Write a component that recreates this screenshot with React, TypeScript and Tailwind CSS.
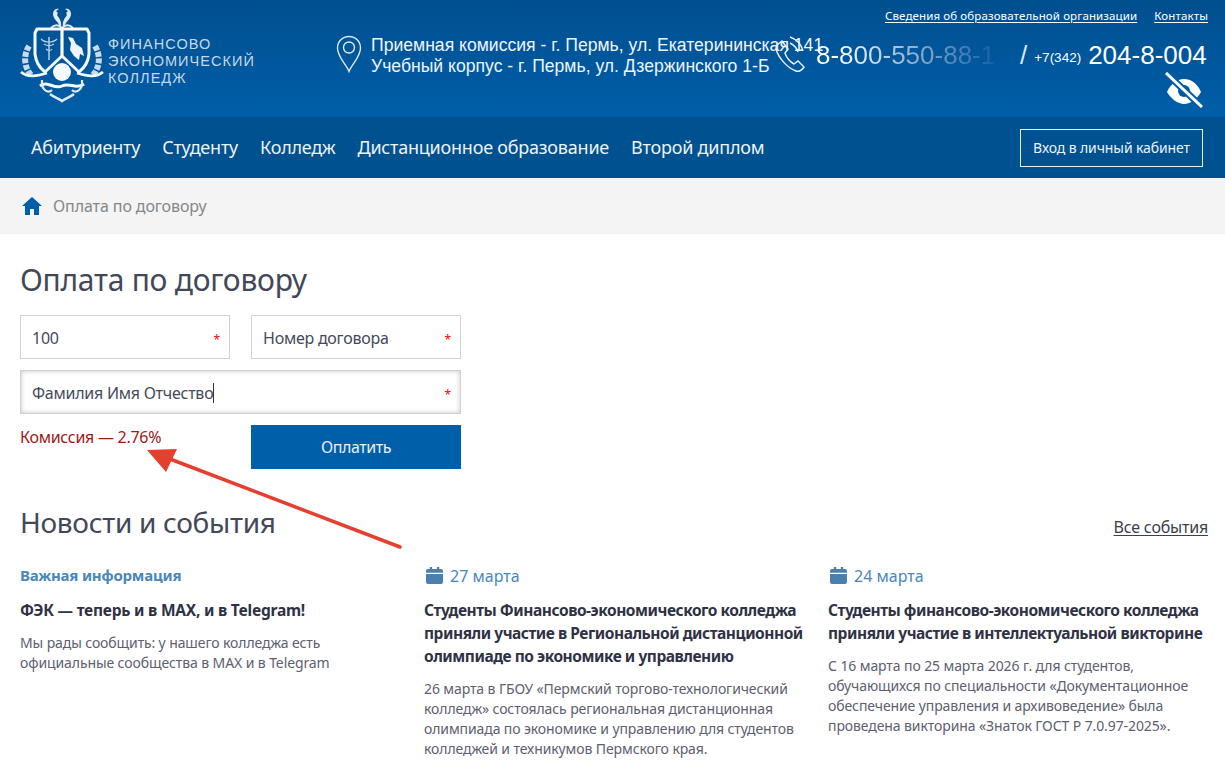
import type { ReactNode } from 'react';

const bodyFont = "font-['Noto_Sans',sans-serif]";

function Logo() {
  return (
    <svg width="84" height="98" viewBox="0 0 84 98" fill="none" className="shrink-0 blur-[0.35px]">
      {/* Птицы сверху */}
      <path d="M39 21 C40 16 33 14 33 8 C33 4 36 2 39 3 L36 5 C38 6 38 8 37 9 C39 12 42 15 41 21 Z" fill="#dfeaf3" />
      <path d="M45 21 C44 16 51 14 51 8 C51 4 48 2 45 3 L48 5 C46 6 46 8 47 9 C45 12 42 15 43 21 Z" fill="#dfeaf3" />
      <path d="M31 22 C35 18 39 19 42 22 C45 19 49 18 53 22" stroke="#dfeaf3" strokeWidth="2" />
      {/* Щит */}
      <path d="M17 23 L67 23 L69 27 L69 48 C68 57 63 63 59 66 L42 50 L25 66 C21 63 16 57 15 48 L15 27 Z" stroke="#f6f9fc" strokeWidth="3" strokeLinejoin="round" />
      <path d="M42 23 L42 50" stroke="#f6f9fc" strokeWidth="3.2" />
      {/* Жезл и орёл */}
      <path d="M29 31 L29 54" stroke="#b8d0e4" strokeWidth="1.5" />
      <path d="M21 33 C25 37 33 37 37 33 M24 38 C27 40 31 40 34 38 M26 43 C28 45 31 45 32 43" stroke="#b8d0e4" strokeWidth="1.2" />
      <path d="M48 31 L53 32 L56 38 L62 42 L64 50 L60 48 L59 54 L54 50 L50 44 L51 37 Z" fill="#eef4f9" />
      {/* Ветви */}
      <path d="M9 40 C3 50 4 62 12 70" stroke="#c8dbea" strokeWidth="6" strokeDasharray="5 1.5" />
      <path d="M75 40 C81 50 80 62 72 70" stroke="#c8dbea" strokeWidth="6" strokeDasharray="5 1.5" />
      <path d="M1 66 C8 72 17 70 27 67 M83 66 C76 72 67 70 57 67" stroke="#f6f9fc" strokeWidth="2.8" />
      {/* Лента и солнце */}
      <circle cx="42" cy="66" r="9" fill="#f6f9fc" />
      <path d="M20 80 C28 74 34 84 42 80 C50 76 56 84 64 78" stroke="#f6f9fc" strokeWidth="3" />
      <path d="M22 74 C21 84 28 88 32 84 M62 74 C63 84 56 88 52 84" stroke="#dfeaf3" strokeWidth="2.2" />
      <path d="M30 88 C35 92 38 92 42 95 C46 92 49 92 54 88" stroke="#dfeaf3" strokeWidth="2.6" />
    </svg>
  );
}

function Pin() {
  return (
    <svg width="26" height="38" viewBox="0 0 26 38" fill="none" stroke="#dce8f2" strokeWidth="1.4" className="shrink-0">
      <path d="M13 36.5 C10 29 1.5 22 1.5 13 C1.5 6.5 6.5 1.5 13 1.5 C19.5 1.5 24.5 6.5 24.5 13 C24.5 22 16 29 13 36.5 Z" />
      <circle cx="13" cy="12.5" r="5.5" />
    </svg>
  );
}

function PhoneIcon() {
  return (
    <svg width="30" height="36" viewBox="0 0 30 36" fill="none" stroke="#eef4fa" strokeWidth="1.4" className="block">
      <path d="M2 9 L7 5 L13 13 L10 17 C11 21 15 26 19 28 L23 25 L29 31 C27 34 24 36 21 35 C12 32 3 21 1 13 C1 11 1 10 2 9 Z" />
      <path d="M15 1 C21 3 26 8 28 15" />
      <path d="M15 7 C19 9 22 12 23 16" />
    </svg>
  );
}

function EyeOff() {
  return (
    <svg width="38" height="36" viewBox="0 0 38 36" className="mr-[5px]">
      <path d="M2 20 C6 11 13 7 19 7 C26 7 32 11 36 20 C32 27 26 32 19 32 C13 32 6 27 2 20 Z" fill="#fff" />
      <circle cx="19" cy="19" r="6" fill="#0059a0" />
      <path d="M1 1 L37 35" stroke="#005ca5" strokeWidth="7" />
      <path d="M1 1 L37 35" stroke="#fff" strokeWidth="3" />
    </svg>
  );
}

function HomeIcon() {
  return (
    <svg width="20" height="18" viewBox="0 0 20 18" fill="#005fa9" className="shrink-0">
      <path d="M10 0 L20 9 L17 9 L17 18 L12 18 L12 12 L8 12 L8 18 L3 18 L3 9 L0 9 Z" />
    </svg>
  );
}

function Field({ text, caret, wide }: { text: string; caret?: boolean; wide?: boolean }) {
  return (
    <div
      className={`flex h-[44px] items-center justify-between border border-[#d2d2d2] pl-[11px] pr-[9px] text-[16px] text-[#444a5c] ${
        wide ? 'shadow-[inset_0_0_5px_rgba(0,0,0,0.22)]' : ''
      }`}
    >
      <span className="mt-[1px] flex items-center tracking-[-0.25px]">
        {text}
        {caret && <span className="h-[20px] w-px bg-[#333]" />}
      </span>
      <span className="mt-[6px] text-[12px] leading-none text-[#f00]">*</span>
    </div>
  );
}

const news = [
  {
    date: '27 марта',
    title: ['Студенты Финансово-экономического колледжа', 'приняли участие в Региональной дистанционной', 'олимпиаде по экономике и управлению'],
    body: ['26 марта в ГБОУ «Пермский торгово-технологический', 'колледж» состоялась региональная дистанционная', 'олимпиада по экономике и управлению для студентов', 'колледжей и техникумов Пермского края.'],
  },
  {
    date: '24 марта',
    title: ['Студенты финансово-экономического колледжа', 'приняли участие в интеллектуальной викторине'],
    body: ['С 16 марта по 25 марта 2026 г. для студентов,', 'обучающихся по специальности «Документационное', 'обеспечение управления и архивоведение» была', 'проведена викторина «Знаток ГОСТ Р 7.0.97-2025».'],
  },
];

function Lines({ items, className }: { items: string[]; className: string }) {
  return (
    <div className={className}>
      {items.map((l) => (
        <div key={l} className="whitespace-nowrap">{l}</div>
      ))}
    </div>
  );
}

function Head({ children }: { children: ReactNode }) {
  return <div className="h-[24px] text-[16px] leading-[24px] text-[#4a86b8]">{children}</div>;
}

export default function App() {
  return (
    <div className={`relative h-[770px] overflow-hidden bg-white ${bodyFont}`}>
      {/* Шапка */}
      <header className="flex h-[117px] bg-gradient-to-b from-[#004f8f] to-[#005ea8] text-white">
        <div className="flex w-[336px] shrink-0 items-start gap-[4px] pl-[20px] pt-[6px]">
          <Logo />
          <div className="mt-[30px] font-['Liberation_Sans',sans-serif] text-[14.5px] leading-[17px] tracking-[1.05px] text-[#c5d8e8]">
            <div>ФИНАНСОВО</div>
            <div className="whitespace-nowrap">ЭКОНОМИЧЕСКИЙ</div>
            <div>КОЛЛЕДЖ</div>
          </div>
        </div>
        <div className="flex w-[434px] shrink-0 items-start gap-[9px] pt-[35px] font-['Liberation_Sans',sans-serif] text-[17.6px] leading-[21px] text-[#eef4fa]">
          <Pin />
          <div className="whitespace-nowrap">
            <div>Приемная комиссия - г. Пермь, ул. Екатерининская 141</div>
            <div>Учебный корпус - г. Пермь, ул. Дзержинского 1-Б</div>
          </div>
        </div>
        <div className="flex flex-1 flex-col items-end pr-[17px] pt-[9px]">
          <div className="flex gap-[17px] text-[11.5px] leading-[14px] tracking-[0.12px] underline underline-offset-2">
            <span className="whitespace-nowrap">Сведения об образовательной организации</span>
            <span>Контакты</span>
          </div>
          <div className="mt-[13px] flex h-[36px] w-full items-center whitespace-nowrap font-['Liberation_Sans',sans-serif] text-[26px] leading-[30px]">
            <span className="ml-[5px] shrink-0"><PhoneIcon /></span>
            <span className="ml-[11px] mt-[2px] w-[204px] shrink-0 overflow-hidden bg-gradient-to-r from-white from-10% via-[#7ba3c6] via-55% to-[#005aa2] to-90% bg-clip-text text-transparent">
              8-800-550-88-1
            </span>
            <span className="mt-[2px] text-[#dfe9f2]">/</span>
            <span className="ml-[7px] mt-[8px] text-[13.5px]">+7(342)</span>
            <span className="ml-[7px] mt-[2px]">204-8-004</span>
          </div>
          <EyeOff />
        </div>
      </header>

      {/* Меню */}
      <nav className="flex h-[61px] items-center justify-between bg-[#005190] pl-[31px] pr-[22px] text-[#eef3f8]">
        <div className="flex gap-[22px] text-[18px] tracking-[-0.22px]">
          <span>Абитуриенту</span>
          <span>Студенту</span>
          <span>Колледж</span>
          <span>Дистанционное образование</span>
          <span>Второй диплом</span>
        </div>
        <div className="flex h-[38px] w-[183px] items-center justify-center border border-[#e8eff5] text-[14px] tracking-[-0.1px]">
          Вход в личный кабинет
        </div>
      </nav>

      {/* Хлебные крошки */}
      <div className="flex h-[56px] items-center gap-[11px] bg-[#f4f4f4] pl-[22px] text-[16px] tracking-[-0.1px] text-[#85878c]">
        <HomeIcon />
        <span>Оплата по договору</span>
      </div>

      <main className="pl-[20px] pr-[17px] pt-[24px]">
        <h1 className="text-[30px] leading-[44px] tracking-[-0.25px] text-[#434858]">Оплата по договору</h1>

        <div className="mt-[13px] grid w-[441px] grid-cols-2 gap-x-[21px] gap-y-[11px]">
          <Field text="100" />
          <Field text="Номер договора" />
          <div className="col-span-2">
            <Field text="Фамилия Имя Отчество" caret wide />
          </div>
          <div className="pt-[1px] text-[16px] leading-[22px] tracking-[-0.27px] text-[#a01818]">Комиссия — 2.76%</div>
          <div className="flex h-[44px] items-center justify-center bg-[#005fa9] text-[16px] tracking-[-0.45px] text-[#e8f0f7]">
            Оплатить
          </div>
        </div>

        <div className="mt-[31px] flex items-end justify-between">
          <h2 className="text-[28px] leading-[44px] tracking-[-0.3px] text-[#434858]">Новости и события</h2>
          <span className="mb-[7px] text-[16px] leading-[20px] tracking-[-0.2px] text-[#3a3f50] underline underline-offset-2">Все события</span>
        </div>

        <div className="mt-[20px] grid grid-cols-3 gap-[24px]">
          <div>
            <div className="h-[24px] text-[15px] font-bold leading-[22px] tracking-[-0.2px] text-[#4a86b8]">Важная информация</div>
            <div className="mt-[11px] text-[15.5px] font-bold leading-[23px] tracking-[-0.22px] text-[#2f3244]">ФЭК — теперь и в MAX, и в Telegram!</div>
            <Lines
              className="mt-[11px] text-[14px] leading-[20px] tracking-[-0.1px] text-[#5c6070]"
              items={['Мы рады сообщить: у нашего колледжа есть', 'официальные сообщества в MAX и в Telegram']}
            />
          </div>
          {news.map((n) => (
            <div key={n.date}>
              <Head>
                <div className="flex items-center gap-[7px] pl-[2px]">
                  <svg width="17" height="17" viewBox="0 0 18 18" fill="#4a80b0" className="mb-[2px]">
                    <path d="M4 0h2.5v2h5V0H14v2h2a2 2 0 0 1 2 2v2H0V4a2 2 0 0 1 2-2h2z" />
                    <path d="M0 7.5h18V16a2 2 0 0 1-2 2H2a2 2 0 0 1-2-2z" />
                  </svg>
                  {n.date}
                </div>
              </Head>
              <Lines className="mt-[11px] text-[15.5px] font-bold leading-[23px] tracking-[-0.47px] text-[#2f3244]" items={n.title} />
              <Lines className="mt-[11px] text-[14px] leading-[20px] tracking-[-0.1px] text-[#5c6070]" items={n.body} />
            </div>
          ))}
        </div>
      </main>

      {/* Стрелка-пометка поверх страницы */}
      <svg className="pointer-events-none absolute left-[140px] top-[440px]" width="270" height="115" viewBox="0 0 270 115">
        <path d="M260 107 L30 19" stroke="#e53f30" strokeWidth="3.5" strokeLinecap="round" />
        <path d="M7 10 L37 9 L26 32 Z" fill="#e53f30" />
      </svg>
    </div>
  );
}
